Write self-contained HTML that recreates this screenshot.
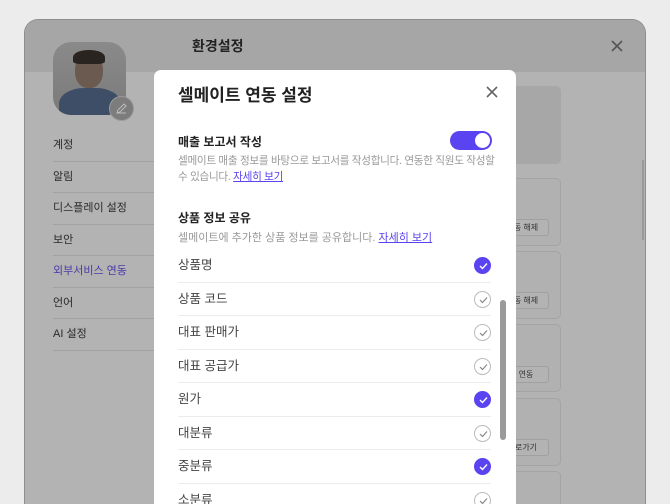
<!DOCTYPE html>
<html><head><meta charset="utf-8"><style>
*{box-sizing:border-box;margin:0;padding:0}
html,body{width:670px;height:504px;overflow:hidden}
body{background:#ececec;font-family:"Liberation Sans","Noto Sans CJK KR",sans-serif;position:relative}
.win{position:absolute;left:24px;top:19px;width:622px;height:485px;border-radius:14px 14px 0 0;background:#b3b3b3;border:1px solid #8e8e8e;border-bottom:none;overflow:hidden}
.hdr{position:absolute;left:0;top:0;right:0;height:52px;background:#a6a6a6}
.t{position:absolute;font-size:14px;color:#222}
.side{position:absolute;left:28px;width:101px;font-size:11px;color:#2a2a2a;height:31.5px;line-height:31px;border-bottom:1px solid #a2a2a2}
.card{position:absolute;left:470px;width:66px;border:1px solid #a4a4a4;border-radius:5px;background:#b1b1b1}
.btn{position:absolute;left:478px;width:46px;height:17px;border:1px solid #a0a0a0;border-radius:3px;font-size:8px;line-height:15px;text-align:center;color:#333;background:#b3b3b3}
.modal{position:absolute;left:154px;top:70px;width:362px;height:434px;background:#fff;border-radius:7px 7px 0 0;overflow:hidden}
.row{position:absolute;left:24px;width:313px;height:33.5px;border-bottom:1px solid #ececec;font-size:12.5px;color:#444;line-height:33px}
.ck{position:absolute;right:0;top:8px;width:17px;height:17px;border-radius:50%;border:1px solid #bbb;background:#fff}
.ck.on{background:#5a43f0;border-color:#5a43f0}
.ck svg{position:absolute;left:3.5px;top:4px}
a{color:#5a43f0;text-decoration:underline}
</style></head><body>
<div class="win">
 <div class="hdr"></div>
 <div class="t" style="left:167px;top:16px;font-weight:bold">환경설정</div>
 <svg style="position:absolute;left:586px;top:20px" width="12" height="12"><path d="M1 1L11 11M11 1L1 11" stroke="#555" stroke-width="1.6"/></svg>
 <div style="position:absolute;left:28px;top:22px;width:73px;height:73px;border-radius:18px;background:linear-gradient(#8a8a8a,#7a7a7a);overflow:hidden">
  <div style="position:absolute;left:22px;top:12px;width:28px;height:34px;border-radius:45%;background:#6a5a50"></div>
  <div style="position:absolute;left:20px;top:8px;width:32px;height:14px;border-radius:50% 50% 20% 20%;background:#2a2420"></div>
  <div style="position:absolute;left:6px;top:46px;width:62px;height:40px;border-radius:40% 40% 0 0;background:#3e4e66"></div>
 </div>
 <div style="position:absolute;left:84px;top:76px;width:25px;height:25px;border-radius:50%;background:#7c7c7c;border:1px solid #9a9a9a"></div>
 <svg style="position:absolute;left:90px;top:82px" width="13" height="13"><path d="M2 11L3 8L9 2L11 4L5 10Z M2 11H11" stroke="#bbb" fill="none" stroke-width="1"/></svg>
 <div class="side" style="top:110px">계정</div>
 <div class="side" style="top:141.5px">알림</div>
 <div class="side" style="top:173px">디스플레이 설정</div>
 <div class="side" style="top:204.5px">보안</div>
 <div class="side" style="top:236px;color:#4a3aa8">외부서비스 연동</div>
 <div class="side" style="top:267.5px">언어</div>
 <div class="side" style="top:299px">AI 설정</div>
 <div style="position:absolute;left:480px;top:66px;width:56px;height:78px;border-radius:5px;background:#a7a7a7"></div>
 <div class="card" style="top:158px;height:68px"></div><div class="btn" style="top:199px">동 해제</div>
 <div class="card" style="top:231px;height:68px"></div><div class="btn" style="top:272px">동 해제</div>
 <div class="card" style="top:304px;height:68px"></div><div class="btn" style="top:346px">연동</div>
 <div class="card" style="top:378px;height:68px"></div><div class="btn" style="top:419px">로가기</div>
 <div class="card" style="top:451px;height:68px"></div>
 <div style="position:absolute;left:617px;top:140px;width:2px;height:80px;background:#999"></div>
</div>
<div class="modal">
 <div style="position:absolute;left:24px;top:11px;font-size:17px;font-weight:bold;color:#222">셀메이트 연동 설정</div>
 <svg style="position:absolute;left:332px;top:16px" width="12" height="12"><path d="M1 1L11 11M11 1L1 11" stroke="#666" stroke-width="1.6"/></svg>
 <div style="position:absolute;left:24px;top:63px;font-size:12px;font-weight:bold;color:#222">매출 보고서 작성</div>
 <div style="position:absolute;left:296px;top:61px;width:42px;height:19px;border-radius:10px;background:#5a43f0"><div style="position:absolute;right:2px;top:2px;width:15px;height:15px;border-radius:50%;background:#fff"></div></div>
 <div style="position:absolute;left:24px;top:84px;width:330px;white-space:nowrap;font-size:10.6px;letter-spacing:-0.3px;line-height:15.5px;color:#999">셀메이트 매출 정보를 바탕으로 보고서를 작성합니다. 연동한 직원도 작성할<br>수 있습니다. <a>자세히 보기</a></div>
 <div style="position:absolute;left:24px;top:139px;font-size:12px;font-weight:bold;color:#222">상품 정보 공유</div>
 <div style="position:absolute;left:24px;top:159px;font-size:11px;color:#999">셀메이트에 추가한 상품 정보를 공유합니다. <a>자세히 보기</a></div>
 <div class="row" style="top:179px">상품명<div class="ck on"><svg width="9" height="8"><path d="M1 4L3.5 6.5L8 1.5" stroke="#fff" fill="none" stroke-width="1.4"/></svg></div></div>
 <div class="row" style="top:212.5px">상품 코드<div class="ck"><svg width="9" height="8"><path d="M1 4L3.5 6.5L8 1.5" stroke="#888" fill="none" stroke-width="1.2"/></svg></div></div>
 <div class="row" style="top:246px">대표 판매가<div class="ck"><svg width="9" height="8"><path d="M1 4L3.5 6.5L8 1.5" stroke="#888" fill="none" stroke-width="1.2"/></svg></div></div>
 <div class="row" style="top:279.5px">대표 공급가<div class="ck"><svg width="9" height="8"><path d="M1 4L3.5 6.5L8 1.5" stroke="#888" fill="none" stroke-width="1.2"/></svg></div></div>
 <div class="row" style="top:313px">원가<div class="ck on"><svg width="9" height="8"><path d="M1 4L3.5 6.5L8 1.5" stroke="#fff" fill="none" stroke-width="1.4"/></svg></div></div>
 <div class="row" style="top:346.5px">대분류<div class="ck"><svg width="9" height="8"><path d="M1 4L3.5 6.5L8 1.5" stroke="#888" fill="none" stroke-width="1.2"/></svg></div></div>
 <div class="row" style="top:380px">중분류<div class="ck on"><svg width="9" height="8"><path d="M1 4L3.5 6.5L8 1.5" stroke="#fff" fill="none" stroke-width="1.4"/></svg></div></div>
 <div class="row" style="top:413.5px">소분류<div class="ck"><svg width="9" height="8"><path d="M1 4L3.5 6.5L8 1.5" stroke="#888" fill="none" stroke-width="1.2"/></svg></div></div>
 <div style="position:absolute;left:346px;top:230px;width:6px;height:140px;border-radius:3px;background:#9a9a9a"></div>
</div>
</body></html>
